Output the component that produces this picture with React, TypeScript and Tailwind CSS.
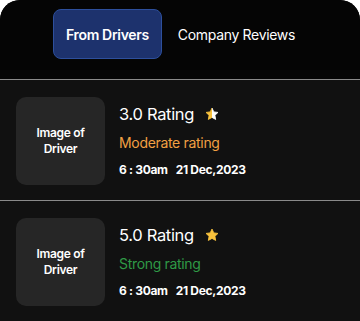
import { useId } from 'react';

type Review = {
  rating: string;
  label: string;
  labelColor: string;
  half: boolean;
};

const reviews: Review[] = [
  { rating: '3.0', label: 'Moderate rating', labelColor: 'text-[#f2a043]', half: true },
  { rating: '5.0', label: 'Strong rating', labelColor: 'text-[#2f9a46]', half: false },
];

function Star({ half }: { half: boolean }) {
  const id = useId();
  return (
    <svg viewBox="0 0 24 24" className="h-[14px] w-[14px]">
      <defs>
        <linearGradient id={id} x1="0" x2="1" y1="0" y2="0">
          <stop offset="50%" stopColor="#f9c23c" />
          <stop offset="50%" stopColor={half ? '#ffffff' : '#f9c23c'} />
        </linearGradient>
      </defs>
      <path
        d="M12 1.8l3.1 6.6 7.1.9-5.2 4.9 1.3 7.1L12 17.8l-6.3 3.5 1.3-7.1L1.8 9.3l7.1-.9z"
        fill={`url(#${id})`}
        stroke={`url(#${id})`}
        strokeWidth="1.5"
        strokeLinejoin="round"
      />
    </svg>
  );
}

function ReviewRow({ review }: { review: Review }) {
  return (
    <div className="flex items-center gap-[14px] border-b border-[#8a8a8a] px-4 pt-[17px] pb-[15px]">
      <div className="flex h-[88px] w-[89px] shrink-0 items-center justify-center rounded-[10px] bg-[#262626] text-center text-[12px] font-semibold leading-[16px] text-white">
        Image of
        <br />
        Driver
      </div>
      <div className="-mt-[2px] flex flex-col">
        <div className="flex items-center gap-[11px] text-[16.5px] leading-[22px] text-white">
          {review.rating} Rating
          <Star half={review.half} />
        </div>
        <div className={`mt-[8px] text-[14px] leading-[20px] ${review.labelColor}`}>{review.label}</div>
        <div className="mt-[9px] flex gap-[8px] text-[12px] font-bold leading-[16px] text-white">
          <span>6 : 30am</span>
          <span>21 Dec,2023</span>
        </div>
      </div>
    </div>
  );
}

export default function App() {
  return (
    <div
      className="h-[321px] w-[360px] bg-white tracking-[-0.02em]"
      style={{ fontFamily: 'Inter, "Noto Sans", sans-serif' }}
    >
      <div className="h-full overflow-hidden rounded-t-[20px] bg-[#111111]">
        <div className="flex h-[80px] items-start justify-center gap-[4px] border-b border-[#8a8a8a] bg-[#050505] pt-[9px]">
          <button className="h-[50px] rounded-[8px] border border-[#2d4f9c] bg-[#1d326d] px-[12px] text-[14px] font-semibold text-white">
            From Drivers
          </button>
          <button className="h-[50px] px-[12px] text-[14px] text-white">Company Reviews</button>
        </div>
        {reviews.map((r) => (
          <ReviewRow key={r.rating} review={r} />
        ))}
      </div>
    </div>
  );
}
